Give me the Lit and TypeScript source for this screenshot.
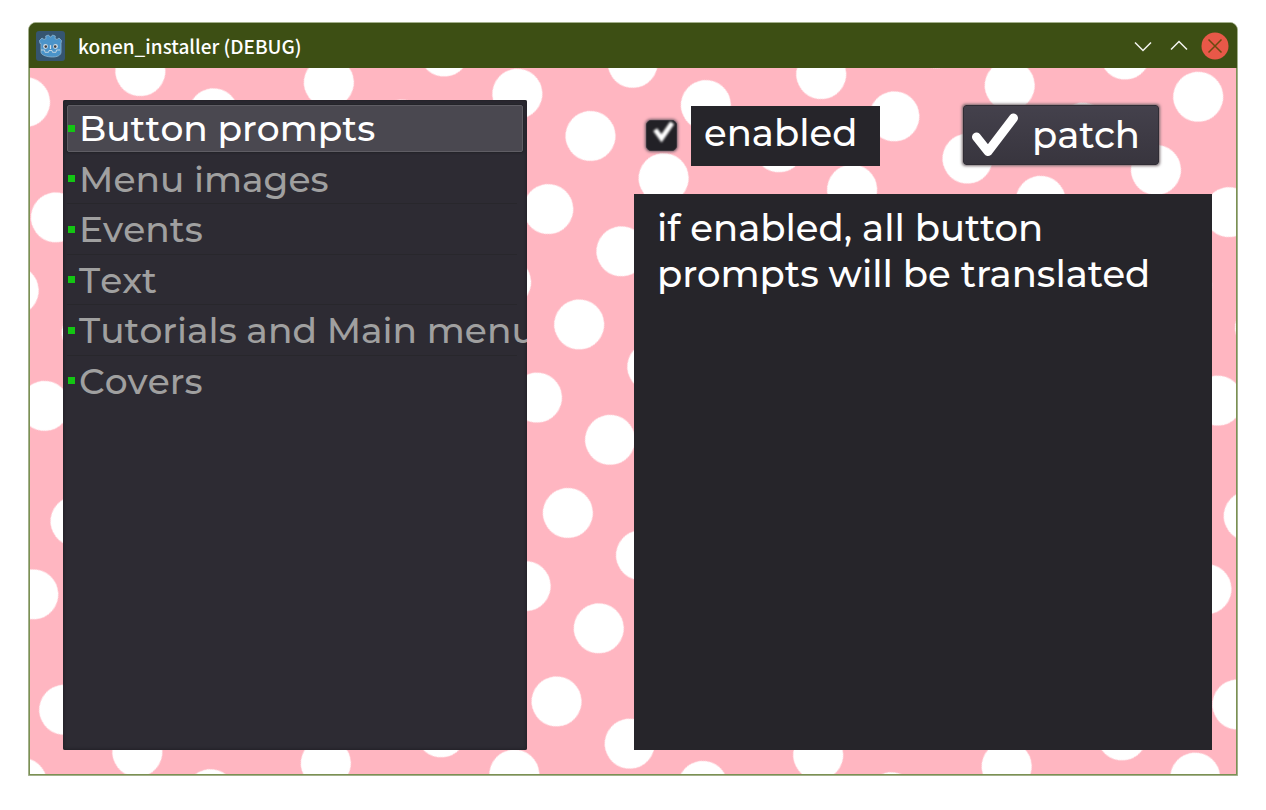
import { LitElement, html, css } from "lit";
import { customElement, property, state } from "lit/decorators.js";

interface Mod {
  name: string;
  info: string;
  enabled: boolean;
}

@customElement("title-bar")
class TitleBar extends LitElement {
  @property() caption = "";

  static styles = css`
    :host {
      display: flex;
      align-items: center;
      height: 45px;
      padding: 0 8px 0 7px;
      background: #3d4f14;
      color: #fff;
      font: 500 19px/28px "Noto Sans CJK SC", "Noto Sans", sans-serif;
    }
    .logo {
      width: 29px;
      height: 30px;
      margin-right: 13px;
    }
    .caption {
      flex: 1;
      margin: 0;
      font: inherit;
      white-space: nowrap;
      overflow: hidden;
      text-overflow: ellipsis;
    }
    .controls {
      display: flex;
      gap: 8px;
    }
    button {
      display: block;
      width: 28px;
      height: 28px;
      padding: 0;
      border: 0;
      background: none;
    }
    svg {
      display: block;
    }
  `;

  render() {
    return html`
      <svg class="logo" viewBox="0 0 29 30" aria-hidden="true">
        <rect width="29" height="30" rx="3" fill="#355570" />
        <path
          d="M4 12.500 3.500 9.500 6 7l2 1.500 2-1-.3-2.500 2.800-1 1.500 2h1l1.500-2 2.800 1-.3 2.500 2 1 2-1.500 2.500 2.500-.5 3v8.500c0 3.500-4 5-8.500 5S5 24.500 5 21V12.500Z"
          fill="#4a93c9" stroke="#8db5d0" stroke-width=".8" stroke-linejoin="round" />
        <path d="M5 19h3.500l.5 2.300h3.500l.5-1.800h3l.5 1.800H20l.5-2.300H24" fill="none" stroke="#bcd3e2" stroke-width="1" />
        <circle cx="9.500" cy="15.500" r="2.400" fill="#cfdbe4" />
        <circle cx="19.500" cy="15.500" r="2.400" fill="#cfdbe4" />
        <circle cx="9.800" cy="15.600" r="1.300" fill="#414042" />
        <circle cx="19.200" cy="15.600" r="1.300" fill="#414042" />
        <path d="M14.500 14.500v3" stroke="#d6dfe6" stroke-width="1.200" stroke-linecap="round" />
      </svg>
      <h1 class="caption">${this.caption}</h1>
      <div class="controls">
        <button aria-label="Minimize">
          <svg width="28" height="28" viewBox="0 0 28 28"><path d="m6 10.500 8 8 8-8" fill="none" stroke="#f4f5f0" stroke-width="1.500" /></svg>
        </button>
        <button aria-label="Maximize">
          <svg width="28" height="28" viewBox="0 0 28 28"><path d="m6 17.500 8-8 8 8" fill="none" stroke="#f4f5f0" stroke-width="1.500" /></svg>
        </button>
        <button aria-label="Close">
          <svg width="28" height="28" viewBox="0 0 28 28">
            <circle cx="14" cy="14" r="13.500" fill="#e85848" />
            <path d="m7.500 7.500 13 13m0-13-13 13" stroke="#6b4a10" stroke-width="1.500" />
          </svg>
        </button>
      </div>
    `;
  }
}

@customElement("app-root")
class AppRoot extends LitElement {
  @state() private selected = 0;
  @state() private mods: Mod[] = [
    { name: "Button prompts", info: "if enabled, all button prompts will be translated", enabled: true },
    { name: "Menu images", info: "if enabled, all menu images will be translated", enabled: true },
    { name: "Events", info: "if enabled, all events will be translated", enabled: true },
    { name: "Text", info: "if enabled, all text will be translated", enabled: true },
    { name: "Tutorials and Main menu", info: "if enabled, tutorials and the main menu will be translated", enabled: true },
    { name: "Covers", info: "if enabled, all covers will be translated", enabled: true },
  ];

  static styles = css`
    :host {
      display: flex;
      box-sizing: border-box;
      min-height: 100vh;
      padding: 22px 28px 34px;
      background: #fff;
      color: #fff;
      font: 500 37px/46px Montserrat, Inter, "Open Sans", sans-serif;
    }
    .window {
      flex: 1;
      display: flex;
      flex-direction: column;
      min-width: 0;
      border: 1px solid #a3b08c;
      border-radius: 8px 8px 0 0;
      overflow: hidden;
      background: #3d4f14;
    }
    .body {
      flex: 1;
      display: grid;
      border: 1px solid #7b9153;
      border-top: 0;
      background: #ffb6c1;
    }
    .dots,
    .content {
      grid-area: 1 / 1;
    }
    .dots {
      width: 100%;
      height: 100%;
      min-height: 0;
      contain: size;
    }
    .content {
      display: grid;
      grid-template-columns: minmax(0, 464fr) minmax(0, 578fr);
      column-gap: 107px;
      padding: 32px 24px 24px 33px;
      z-index: 1;
    }
    .list {
      padding: 3px 4px;
      border-radius: 2px;
      overflow: hidden;
      background: #2d2b33;
      box-shadow: inset 0 0 3px 1px #222127;
    }
    .items {
      display: grid;
      grid-template-columns: minmax(0, 1fr);
      grid-auto-rows: 1fr;
      height: 303px;
      margin: 0;
      padding: 0;
      list-style: none;
    }
    .row {
      display: flex;
      padding: 2px 0;
      background: linear-gradient(#28272c, #28272c) 0 100% / calc(100% - 6px) 1px no-repeat;
    }
    .row:first-child,
    .row:last-child {
      background: none;
    }
    .item {
      flex: 1;
      display: flex;
      align-items: center;
      gap: 4px;
      min-width: 0;
      padding: 0;
      border: 1px solid transparent;
      border-radius: 2px;
      background: none;
      color: #a0a0a0;
      font: inherit;
      font-size: 36px;
      font-kerning: none;
      line-height: 44px;
      white-space: nowrap;
    }
    .item.selected {
      border-color: #5f5d64;
      background: #4a4850;
      color: #fff;
      box-shadow: 0 0 2px 1px #232228;
    }
    .mark {
      flex: none;
      width: 7px;
      height: 7px;
      background: #13c613;
    }
    .side {
      display: flex;
      flex-direction: column;
      gap: 28px;
    }
    .tools {
      display: flex;
      align-items: center;
      height: 60px;
      margin: 6px 53px 0 12px;
    }
    .checkwrap {
      display: grid;
      margin: 0 14px 2px 0;
    }
    .check {
      grid-area: 1 / 1;
      appearance: none;
      box-sizing: border-box;
      width: 31px;
      height: 31px;
      margin: 0;
      border: 1px solid #3a353c;
      border-radius: 5px;
      background: #222126;
      box-shadow: 0 0 3px 1px #75606a;
    }
    .tick {
      grid-area: 1 / 1;
      pointer-events: none;
      filter: blur(1px);
    }
    .label {
      box-sizing: border-box;
      min-width: 189px;
      padding: 4px 13px 10px;
      background: #26252a;
    }
    .patch {
      display: flex;
      align-items: center;
      box-sizing: border-box;
      height: 60px;
      margin: 0 0 2px auto;
      padding: 0 18px 0 8px;
      gap: 14px;
      border: 1px solid #302d35;
      border-radius: 3px;
      background: linear-gradient(#44414c, #38353e);
      box-shadow: 0 0 3px 1px #75696d;
      color: #fff;
      font: inherit;
    }
    .info {
      flex: 1;
      margin: 0;
      padding: 11px 23px;
      background: #26252a;
    }
  `;

  private toggle(e: Event) {
    const on = (e.target as HTMLInputElement).checked;
    this.mods = this.mods.map((m, i) => (i === this.selected ? { ...m, enabled: on } : m));
  }

  render() {
    const mod = this.mods[this.selected];
    return html`
      <main class="window">
        <title-bar caption="konen_installer (DEBUG)"></title-bar>
        <div class="body">
          <svg class="dots" aria-hidden="true">
            <defs>
              <pattern id="polka" width="84.45" height="84.45" patternUnits="userSpaceOnUse"
                patternTransform="translate(560.5 68) rotate(30) translate(-42.225 -42.225)">
                <circle cx="42.225" cy="42.225" r="25" fill="#fff" />
              </pattern>
            </defs>
            <rect width="100%" height="100%" fill="url(#polka)" />
          </svg>
          <div class="content">
            <nav class="list">
              <ul class="items">
                ${this.mods.map(
                  (m, i) => html`<li class="row">
                    <button class="item ${i === this.selected ? "selected" : ""}" @click=${() => (this.selected = i)}>
                      <span class="mark"></span><span>${m.name}</span>
                    </button>
                  </li>`
                )}
              </ul>
            </nav>
            <section class="side">
              <div class="tools">
                <span class="checkwrap">
                  <input class="check" id="enabled" type="checkbox" .checked=${mod.enabled} @change=${this.toggle} />
                  ${mod.enabled
                    ? html`<svg class="tick" width="31" height="31" viewBox="0 0 32 32" aria-hidden="true">
                        <path d="m9.500 10 6.500 9L27 3" fill="none" stroke="#fff" stroke-width="5" />
                      </svg>`
                    : ""}
                </span>
                <label class="label" for="enabled">enabled</label>
                <button class="patch">
                  <svg width="46" height="44" viewBox="0 0 46 44" aria-hidden="true">
                    <path d="M4.500 24 16 38.500 41.500 5" fill="none" stroke="#fff" stroke-width="9" stroke-linecap="round" stroke-linejoin="round" />
                  </svg>
                  <span>patch</span>
                </button>
              </div>
              <p class="info">${mod.info}</p>
            </section>
          </div>
        </div>
      </main>
    `;
  }
}
